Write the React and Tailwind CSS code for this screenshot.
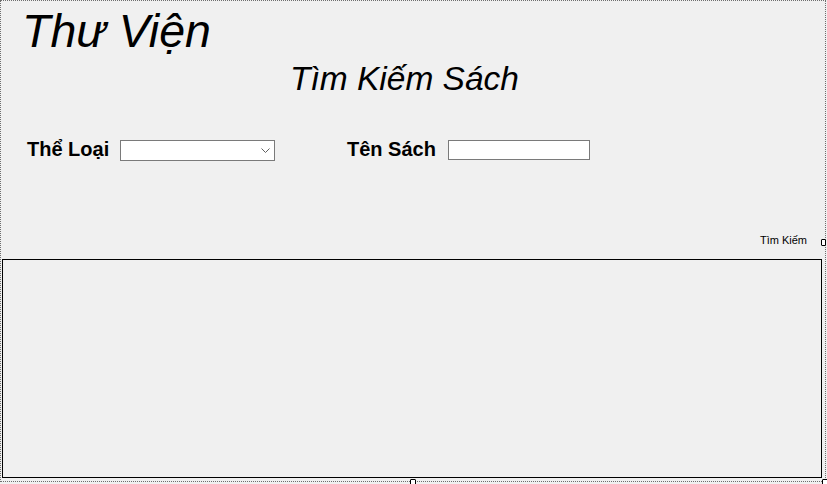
import React from 'react';

/* ── Combo box: white field, grey frame, small chevron ─────────────────── */
const ComboBox = () => (
  <div className="w-[155px] h-[21px] bg-white border border-[#7a7a7a] flex items-center justify-end pr-[4px]">
    <svg width="9" height="5" viewBox="0 0 9 5" className="block">
      <path d="M0.5 0.5 L4.5 4.5 L8.5 0.5" fill="none" stroke="#606060" strokeWidth="1" />
    </svg>
  </div>
);

/* ── Designer resize handle ─────────────────────────────────────────────── */
const Handle = ({ className }) => (
  <div className={`absolute w-[5px] h-[7px] bg-white border border-black rounded-[1px] ${className}`} />
);

const App = () => {
  const font = { fontFamily: '"Liberation Sans", Arial, sans-serif' };

  return (
    <div className="relative w-[827px] h-[484px] bg-[#f0f0f0] overflow-hidden" style={font}>
      <div className="w-[826px] h-[482px] border border-dotted border-[#6e6e6e] flex flex-col">

        {/* ── Title ── */}
        <div className="pt-[7px] pl-[21px] h-[53px]">
          <h1 className="italic text-[46.5px] leading-[46px] text-black">Thư Viện</h1>
        </div>

        {/* ── Subtitle ── */}
        <div className="mt-[8px] pl-[289px]">
          <h2 className="italic text-[33.5px] leading-[33px] text-black">Tìm Kiếm Sách</h2>
        </div>

        {/* ── Search fields ── */}
        <div className="mt-[45px] flex items-start h-[21px]">
          <span className="ml-[26px] w-[93px] font-bold text-[20px] leading-[19px] text-black">Thể Loại</span>
          <ComboBox />
          <span className="ml-[72px] w-[101px] font-bold text-[20px] leading-[19px] text-black">Tên Sách</span>
          <div className="w-[142px] h-[20px] bg-white border border-[#7a7a7a]" />
        </div>

        {/* ── Search button caption ── */}
        <div className="mt-[73px] flex justify-end pr-[18px]">
          <span className="text-[11px] leading-[13px] text-black">Tìm Kiếm</span>
        </div>

        {/* ── Results grid ── */}
        <div className="mt-[12px] ml-[1px] w-[820px] h-[219px] border border-black bg-[#f0f0f0]" />
      </div>

      <Handle className="left-[821px] top-[239px]" />
      <Handle className="left-[410px] top-[479px] w-[6px] h-[6px]" />
      <Handle className="left-[822px] top-[479px] w-[6px] h-[6px]" />
    </div>
  );
};

export default App;
